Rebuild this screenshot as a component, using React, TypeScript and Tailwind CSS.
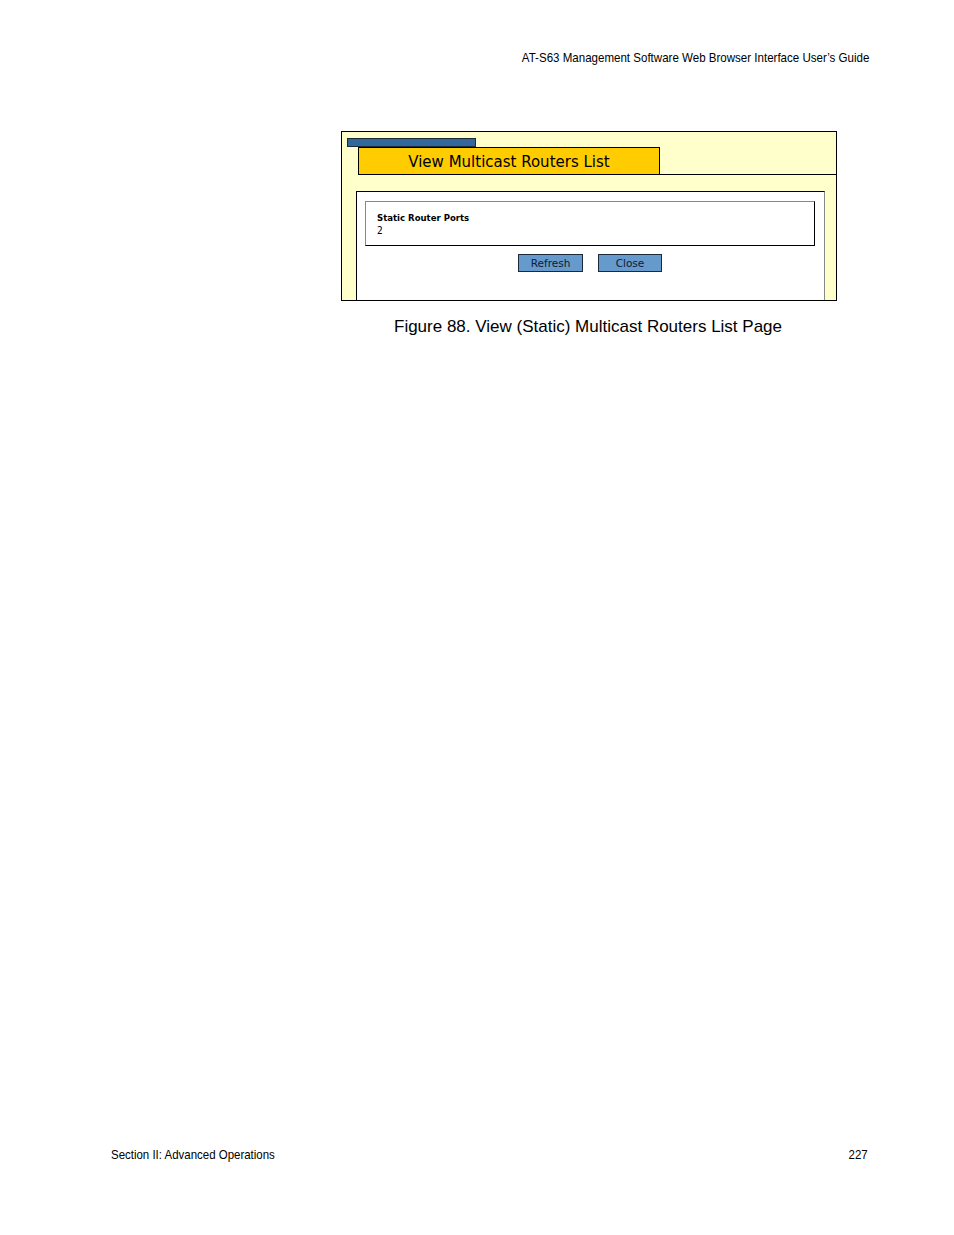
export default function App() {
  return (
    <div className="flex h-[1235px] w-[954px] flex-col bg-white font-['Liberation_Sans',Arial,sans-serif] text-black">
      {/* running header */}
      <div className="flex justify-end pr-[85px] pt-[50px]">
        <span className="origin-right scale-x-[0.888] whitespace-nowrap text-[13px] leading-[16px]">
          AT-S63 Management Software Web Browser Interface User’s Guide
        </span>
      </div>

      {/* figure */}
      <div className="mt-[65px] pl-[341px]">
        <div className="flex h-[170px] w-[496px] flex-col border border-black bg-[#ffffcc]">
          <div className="ml-[5px] mt-[6px] h-[9px] w-[129px] border border-[#1a2a3a] bg-[#336699]" />
          <div className="flex">
            <div className="ml-[16px] flex h-[28px] w-[302px] items-center justify-center border border-black bg-[#ffcc00] pt-[2px]">
              <span className="font-['DejaVu_Sans',Verdana,sans-serif] text-[15px] leading-none">
                View Multicast Routers List
              </span>
            </div>
            <div className="flex-1 border-b border-black" />
          </div>
          <div className="ml-[14px] mt-[16px] flex w-[469px] flex-1 flex-col border-l border-r border-t border-l-black border-r-[#888] border-t-black bg-white">
            <div className="ml-[8px] mt-[9px] h-[45px] w-[450px] border border-b-black border-l-[#888] border-r-black border-t-[#888] pl-[11px] pt-[9px] font-['DejaVu_Sans_Condensed','DejaVu_Sans',sans-serif] text-[10px] leading-[13px]">
              <div className="text-[9.5px] font-bold">Static Router Ports</div>
              <div>2</div>
            </div>
            <div className="mt-[8px] flex justify-center gap-[15px] pr-[1px]">
              <button className="flex h-[18px] w-[65px] items-center justify-center border border-[#1a2a3a] bg-[#6699cc] font-['DejaVu_Sans',Verdana,sans-serif] text-[10.5px] leading-none text-[#0f1a33]">
                Refresh
              </button>
              <button className="flex h-[18px] w-[64px] items-center justify-center border border-[#1a2a3a] bg-[#6699cc] font-['DejaVu_Sans',Verdana,sans-serif] text-[10.5px] leading-none text-[#0f1a33]">
                Close
              </button>
            </div>
          </div>
        </div>
      </div>

      <div className="mt-[16px] pl-[394px] text-[17px] leading-[20px]">
        Figure 88. View (Static) Multicast Routers List Page
      </div>

      {/* running footer */}
      <div className="mt-auto flex justify-between pb-[72px] pl-[111px] pr-[86px] text-[13px] leading-[16px]">
        <span className="origin-left scale-x-[0.882] whitespace-nowrap">Section II: Advanced Operations</span>
        <span className="origin-right scale-x-[0.88]">227</span>
      </div>
    </div>
  );
}
